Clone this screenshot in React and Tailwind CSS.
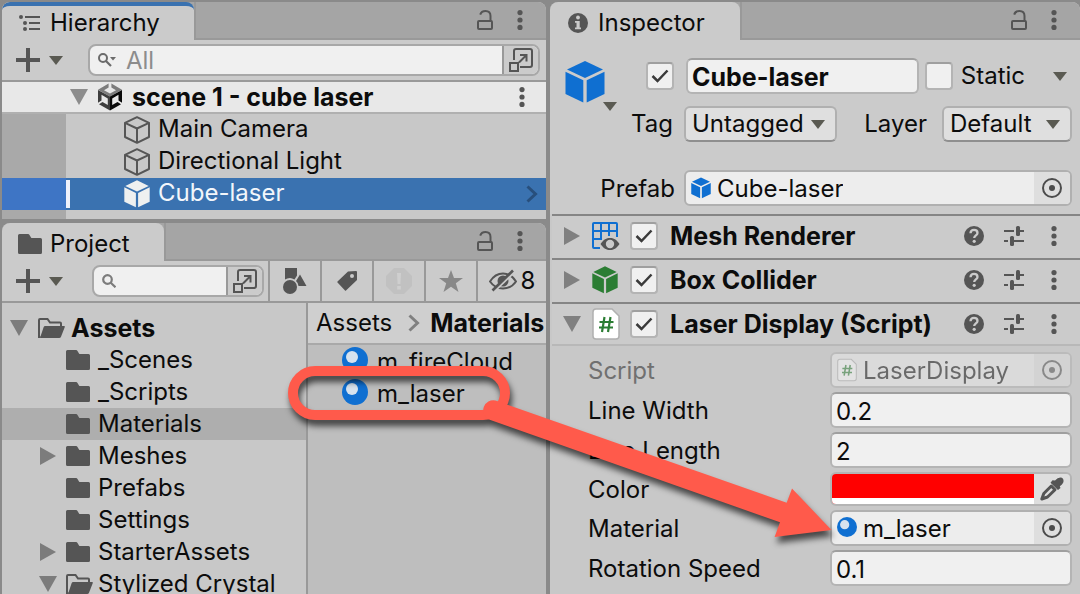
import { useId } from "react";

/* ---------- icons ---------- */

function Triangle({ dir = "down", className = "" }) {
  return dir === "down" ? (
    <svg className={className} width="18" height="16" viewBox="0 0 18 16" aria-hidden="true">
      <path d="M0 0H18L9 16Z" fill="currentColor" />
    </svg>
  ) : (
    <svg className={className} width="16" height="18" viewBox="0 0 16 18" aria-hidden="true">
      <path d="M0 0L16 9L0 18Z" fill="currentColor" />
    </svg>
  );
}

function Caret({ className = "" }) {
  return (
    <svg className={"shrink-0 text-[#5a5a52] " + className} width="14" height="9" viewBox="0 0 14 9" aria-hidden="true">
      <path d="M0 0H14L7 9Z" fill="currentColor" />
    </svg>
  );
}

function Dots() {
  return (
    <svg width="6" height="20" viewBox="0 0 6 20" fill="#555" aria-hidden="true">
      <circle cx="3" cy="2.6" r="2.6" />
      <circle cx="3" cy="10" r="2.6" />
      <circle cx="3" cy="17.4" r="2.6" />
    </svg>
  );
}

function Unlock() {
  return (
    <svg width="16" height="20" viewBox="0 0 16 20" fill="none" stroke="#555" strokeWidth="2" aria-hidden="true">
      <rect x="1" y="11" width="14" height="8" rx="1" />
      <path d="M3.2 4.6C4 2 6 1 8.500 1C11.500 1 13.500 2.800 13.500 6V11" />
    </svg>
  );
}

function Plus() {
  return (
    <svg width="24" height="24" viewBox="0 0 24 24" aria-hidden="true">
      <path d="M12 0V24M0 12H24" stroke="#555" strokeWidth="4" />
    </svg>
  );
}

function Expand() {
  return (
    <svg width="24" height="24" viewBox="0 0 24 24" fill="none" stroke="#555" strokeWidth="2" aria-hidden="true">
      <path d="M5 12V3Q5 1 7 1H21Q23 1 23 3V17Q23 19 21 19H11" />
      <rect x="1" y="15" width="8" height="8" />
      <path d="M10 14.500L17 7.500M11 7H17.500V13.500" />
    </svg>
  );
}

function Search({ menu }) {
  return menu ? (
    <svg className="shrink-0" width="18" height="14" viewBox="0 0 18 14" fill="none" aria-hidden="true">
      <circle cx="5" cy="5" r="4" stroke="#6b6b6b" strokeWidth="2" />
      <path d="M8 8L13 13" stroke="#6b6b6b" strokeWidth="2.200" />
      <path d="M12 4H18L15 7.500Z" fill="#6b6b6b" />
    </svg>
  ) : (
    <svg className="shrink-0" width="14" height="14" viewBox="0 0 14 14" fill="none" aria-hidden="true">
      <circle cx="5.500" cy="5.500" r="4.300" stroke="#7c7c7c" strokeWidth="2.200" />
      <path d="M8.500 8.500L13.500 13.300" stroke="#7c7c7c" strokeWidth="2.200" />
    </svg>
  );
}

function ListIcon() {
  return (
    <svg width="22" height="16" viewBox="0 0 22 16" fill="#555" aria-hidden="true">
      <circle cx="2" cy="2" r="2" />
      <circle cx="6" cy="8" r="2" />
      <circle cx="6" cy="14" r="2" />
      <path d="M6 1H21V3H6ZM10 7H21V9H10ZM10 13H21V15H10Z" />
    </svg>
  );
}

function UnityLogo() {
  return (
    <svg width="24" height="28" viewBox="0 0 24 28" aria-hidden="true">
      <path d="M10.600 0.500V4.500L6 7.200L12 10.500L18 7.200L13.400 4.500V0.500L24 6.800L12 13.600L0 6.800Z" fill="#7c7c7c" />
      <path d="M0 7L12 13.600V27.500L1 21.200L4.500 19L9.800 22V15.500L3.500 11.800V17.500L0 19.800Z" fill="#3d3d3d" />
      <path d="M24 7L12 13.600V27.500L23 21.200L19.500 19L14.200 22V15.500L20.500 11.800V17.500L24 19.800Z" fill="#0a0a0a" />
    </svg>
  );
}

function CubeOutline() {
  return (
    <svg width="26" height="28" viewBox="0 0 26 28" fill="none" stroke="#565656" strokeWidth="2" strokeLinejoin="round" aria-hidden="true">
      <path d="M13 1.200L25 6.800V21L13 26.800L1 21V6.800ZM1 6.800L13 12.500L25 6.800M13 12.500V26.800" />
    </svg>
  );
}

function CubeSolid({ className = "" }) {
  return (
    <svg className={className} viewBox="0 0 40 42" fill="currentColor" aria-hidden="true">
      <path d="M20 0L38 8.500L20 17L2 8.500Z" />
      <path d="M0.500 10.800L18.300 19.300V41.500L0.500 33Z" />
      <path d="M39.500 10.800L21.700 19.300V41.500L39.500 33Z" />
    </svg>
  );
}

function Folder() {
  return (
    <svg width="24" height="20" viewBox="0 0 24 20" aria-hidden="true">
      <path d="M0 1.500Q0 0 1.500 0H10Q11 0 11.500 1L13 3.500Q13.300 4 14 4H22.500Q24 4 24 5.500V18.500Q24 20 22.500 20H1.500Q0 20 0 18.500Z" fill="#555" />
    </svg>
  );
}

function FolderOpen() {
  return (
    <svg width="27" height="20" viewBox="0 0 27 20" aria-hidden="true">
      <path d="M2.500 19H1V2Q1 1 2 1H9.500L12 4.500H22Q23 4.500 23 5.500V8" fill="none" stroke="#555" strokeWidth="2" />
      <path d="M7.200 8H26Q27.200 8 26.800 9L23 18.800Q22.500 20 21.200 20H2L5.600 9.200Q6 8 7.200 8Z" fill="#555" />
    </svg>
  );
}

function MaterialBall({ className = "" }) {
  return (
    <svg className={className} viewBox="0 0 26 26" aria-hidden="true">
      <circle cx="13" cy="13" r="13" fill="#0f6fd1" />
      <circle cx="10" cy="10" r="6" fill="#d6e2ee" />
    </svg>
  );
}

function Chevron({ className = "" }) {
  return (
    <svg className={className} width="12" height="18" viewBox="0 0 12 18" fill="none" stroke="currentColor" strokeWidth="3" aria-hidden="true">
      <path d="M1.500 1.500L9.500 9L1.500 16.500" />
    </svg>
  );
}

function InfoIcon() {
  return (
    <svg width="20" height="20" viewBox="0 0 20 20" aria-hidden="true">
      <circle cx="10" cy="10" r="10" fill="#555" />
      <circle cx="10" cy="4.500" r="1.900" fill="#cbcbcb" />
      <path d="M7 8H11.700V14.500H13V16.300H7V14.500H8.500V9.700H7Z" fill="#cbcbcb" />
    </svg>
  );
}

function HelpIcon() {
  return (
    <svg width="20" height="20" viewBox="0 0 20 20" aria-hidden="true">
      <circle cx="10" cy="10" r="10" fill="#555" />
      <path d="M6.500 7.300C6.600 4.800 8.200 3.900 10 3.900C12 3.900 13.500 5 13.500 6.900C13.500 9.300 10.200 9.400 10.200 12" fill="none" stroke="#cbcbcb" strokeWidth="2.300" />
      <circle cx="10.200" cy="15.300" r="1.600" fill="#cbcbcb" />
    </svg>
  );
}

function Sliders() {
  return (
    <svg width="20" height="20" viewBox="0 0 20 20" fill="#555" aria-hidden="true">
      <path d="M0 4H10V6H0ZM16 4H20V6H16ZM0 14H4V16H0ZM10 14H20V16H10Z" />
      <rect x="12" y="0" width="4" height="10" rx="1.500" />
      <rect x="6" y="10" width="4" height="10" rx="1.500" />
    </svg>
  );
}

function MeshIcon() {
  return (
    <svg width="28" height="28" viewBox="0 0 28 28" fill="none" aria-hidden="true">
      <path d="M8 26H2Q1 26 1 25V2Q1 1 2 1H24Q25 1 25 2V15M9 1V18M17 1V14M1 9H25M1 17H10" stroke="#0f6fd1" strokeWidth="2" />
      <path d="M8.500 22C11.500 17.500 14.500 16 18 16C21.500 16 24.500 17.500 27.500 22C24.500 26.500 21.500 28 18 28C14.500 28 11.500 26.500 8.500 22Z" fill="#555" />
      <circle cx="18" cy="22" r="4.200" fill="#cbcbcb" />
    </svg>
  );
}

function ScriptIcon({ className = "" }) {
  return (
    <svg className={className} viewBox="0 0 28 32" fill="none" aria-hidden="true">
      <path d="M4 1H20L27 8V28Q27 31 24 31H4Q1 31 1 28V4Q1 1 4 1Z" fill="#fff" stroke="#b0b0b0" strokeWidth="1.500" />
      <path d="M12.500 9L10 24M18.500 9L16 24M7.500 14H21.500M7 19.500H21" stroke="#2b7d33" strokeWidth="2.200" />
    </svg>
  );
}

function Target() {
  return (
    <svg width="20" height="20" viewBox="0 0 20 20" aria-hidden="true">
      <circle cx="10" cy="10" r="9" fill="none" stroke="#4c4c4c" strokeWidth="2" />
      <circle cx="10" cy="10" r="3" fill="#4c4c4c" />
    </svg>
  );
}

function Eyedropper() {
  return (
    <svg width="24" height="24" viewBox="0 0 24 24" aria-hidden="true">
      <path d="M15 3.500Q18.500 -0.500 22 0.800Q24.500 2.500 23 6Q22 8 19.800 9.200L20.500 11L18 13L10.500 5.800L12.500 3.300Z" fill="#555" />
      <path d="M11.300 9L15 12.700L7.500 20L1.800 22L3.800 16.500Z" fill="none" stroke="#555" strokeWidth="3" strokeLinejoin="round" />
    </svg>
  );
}

function ShapesIcon() {
  return (
    <svg width="24" height="26" viewBox="0 0 24 26" fill="#555" aria-hidden="true">
      <path d="M2 0H14V7.500L11.500 11.500Q9 10 7 10Q4 10 2 11.500Z" />
      <circle cx="7" cy="19" r="7" />
      <path d="M17 6.500L23.500 18H15.500Q15 14.500 13 13Z" />
    </svg>
  );
}

function TagIcon() {
  return (
    <svg width="20" height="20" viewBox="0 0 20 20" aria-hidden="true">
      <path fillRule="evenodd" d="M11 0.500L19 0Q20 0 20 1V9L9 19.500Q8.500 20 8 19.500L0.500 11.500Q0 11 0.500 10.500ZM15 3A2 2 0 1 0 15 7A2 2 0 1 0 15 3Z" fill="#555" />
    </svg>
  );
}

function WarnIcon() {
  return (
    <svg width="26" height="26" viewBox="0 0 26 26" aria-hidden="true">
      <path d="M8 0H18L26 8V18L18 26H8L0 18V8Z" fill="#c1c1c1" />
      <path d="M11 5H15L14.400 16H11.600ZM11.200 18H14.800V21.500H11.200Z" fill="#cfcfcf" />
    </svg>
  );
}

function StarIcon() {
  return (
    <svg width="24" height="22" viewBox="0 0 24 22" aria-hidden="true">
      <path d="M12 0L15 8H24L16.800 13.200L19.500 22L12 16.800L4.500 22L7.200 13.200L0 8H9Z" fill="#888" />
    </svg>
  );
}

function HiddenIcon() {
  return (
    <svg width="28" height="24" viewBox="0 0 28 24" fill="none" aria-hidden="true">
      <path d="M1 12.500C4.500 7 9 4.500 14 4.500C19 4.500 23.500 7 27 12.500C23.500 17.500 19 19.500 14 19.500C9 19.500 4.500 17.500 1 12.500Z" stroke="#555" strokeWidth="2" />
      <circle cx="14" cy="12" r="5.500" fill="#555" />
      <path d="M5 22L25 3" stroke="#cbcbcb" strokeWidth="3" />
      <path d="M3.500 21.500L24 1.500" stroke="#555" strokeWidth="2.600" />
    </svg>
  );
}

/* ---------- shared controls ---------- */

function Check({ label, id, checked = false }) {
  return (
    <span className="grid shrink-0 place-items-center">
      <input
        id={id}
        type="checkbox"
        defaultChecked={checked}
        aria-label={label}
        className="peer col-start-1 row-start-1 size-7 appearance-none rounded border-2 border-[#b4b4b4] border-t-[#9f9f9f] bg-[#f0f0f0]"
      />
      <svg className="pointer-events-none invisible col-start-1 row-start-1 peer-checked:visible" width="18" height="14" viewBox="0 0 18 14" fill="none" aria-hidden="true">
        <path d="M1.500 7L6.500 12L16.500 1.500" stroke="#3a3a3a" strokeWidth="2.500" />
      </svg>
    </span>
  );
}

function Dropdown({ id, value, className = "" }) {
  return (
    <span className={"grid items-center " + className}>
      <select id={id} className="col-start-1 row-start-1 h-9 w-full appearance-none rounded-md border-2 border-[#b0b0b0] border-b-[#8f8f8f] bg-[#dfdfdf] pl-1.5">
        <option>{value}</option>
      </select>
      <Caret className="pointer-events-none col-start-1 row-start-1 mr-3 justify-self-end" />
    </span>
  );
}

function ObjectField({ icon, value, label, disabled }) {
  return (
    <div
      className={
        "flex h-9 min-w-0 items-stretch overflow-hidden rounded-md border-2 border-[#b0b0b0] bg-[#ededed]" +
        (disabled ? " opacity-50" : "")
      }
    >
      <span className="flex min-w-0 flex-1 items-center gap-1.5 pl-[5px]">
        {icon}
        <span className="truncate pt-0.5">{value}</span>
      </span>
      <button type="button" disabled={disabled} aria-label={"Select " + label} className="flex w-9 items-center justify-center bg-[#dedede]">
        <Target />
      </button>
    </div>
  );
}

function Panel({ title, icon, focused, tabClass, children, className = "" }) {
  return (
    <section className={"flex min-h-0 min-w-0 flex-col overflow-hidden rounded-t-lg bg-[#c8c8c8] " + className}>
      <header className="flex h-[38px] shrink-0 items-stretch bg-[#a5a5a5]">
        <h2
          className={
            "flex items-center rounded-t-lg bg-[#cbcbcb] " +
            tabClass +
            (focused ? " border-t-4 border-[#3a72b0]" : " pt-1")
          }
        >
          {icon}
          {title}
        </h2>
        <div className="flex flex-1 items-center justify-end gap-6 border-b-2 border-l-2 border-[#999] pr-[23px]">
          <button type="button" aria-label={"Lock " + title}><Unlock /></button>
          <button type="button" aria-label={title + " menu"}><Dots /></button>
        </div>
      </header>
      {children}
    </section>
  );
}

function AddButton() {
  return (
    <button type="button" aria-label="Create" className="flex shrink-0 items-center gap-[9px] pl-3.5">
      <Plus />
      <Caret />
    </button>
  );
}

function SearchBox({ placeholder, label, menu, className = "" }) {
  return (
    <div className={"flex h-8 min-w-0 overflow-hidden rounded-lg border-2 border-[#a8a8a8] bg-[#f0f0f0] " + className}>
      <label className="flex min-w-0 flex-1 items-center gap-2.5 pl-2">
        <Search menu={menu} />
        <input type="search" aria-label={label} placeholder={placeholder} className="w-full min-w-0 bg-transparent pt-0.5 placeholder:text-[#8c8c8c]" />
      </label>
      <button type="button" aria-label="Open search window" className="flex w-9 items-center justify-center border-l-2 border-[#999] bg-[#cbcbcb]">
        <Expand />
      </button>
    </div>
  );
}

/* ---------- hierarchy ---------- */

function HierarchyItem({ name, selected }) {
  return (
    <li className={"flex h-8 items-stretch " + (selected ? "bg-[#3a72b0] text-[#f2f6fb]" : "")}>
      <span className={"w-16 " + (selected ? "bg-[#3e75c5]" : "bg-[#a9a9a9]")} />
      <span className={"my-0.5 w-1 " + (selected ? "bg-[#eef0fb]" : "")} />
      <a href="#" className="flex flex-1 items-center gap-2 pr-2 pl-[54px]">
        {selected ? <CubeSolid className="h-7 w-[26px] text-[#eef0f0]" /> : <CubeOutline />}
        <span className="flex-1 pb-0.5">{name}</span>
        {selected && <Chevron className="text-[#284f7c]" />}
      </a>
    </li>
  );
}

function Hierarchy() {
  return (
    <Panel title="Hierarchy" icon={<ListIcon />} focused tabClass="w-48 gap-[9px] pl-[17px]" className="h-[217px] shrink-0">
      <div className="flex h-[42px] shrink-0 items-center gap-[25px] border-b-2 border-[#999] bg-[#cbcbcb] pr-1.5">
        <AddButton />
        <SearchBox menu placeholder="All" label="Search hierarchy" className="flex-1" />
      </div>
      <div className="flex h-8 shrink-0 items-center border-b-2 border-[#b0b0b0] bg-[#e8e8e8] pr-[21px] pl-[68px] text-[25px] font-bold">
        <Triangle className="text-[#8c8c8c]" />
        <span className="flex flex-1 items-center gap-2.5 pl-2.5">
          <UnityLogo />
          <span>scene 1 - cube laser</span>
        </span>
        <button type="button" aria-label="Scene menu"><Dots /></button>
      </div>
      <ul>
        <HierarchyItem name="Main Camera" />
        <HierarchyItem name="Directional Light" />
        <HierarchyItem name="Cube-laser" selected />
      </ul>
      <div className="w-16 flex-1 bg-[#a9a9a9]" />
    </Panel>
  );
}

/* ---------- project ---------- */

const folders = [
  { name: "_Scenes" },
  { name: "_Scripts" },
  { name: "Materials", selected: true },
  { name: "Meshes", arrow: "right" },
  { name: "Prefabs" },
  { name: "Settings" },
  { name: "StarterAssets", arrow: "right" },
  { name: "Stylized Crystal", arrow: "down", open: true },
];

function FilterButton({ label, children, wide }) {
  return (
    <button type="button" aria-label={label} className={"flex items-center justify-center gap-1 border-l-2 border-[#999] " + (wide ? "w-[70px] shrink-0" : "w-[52px] shrink-0")}>
      {children}
    </button>
  );
}

function Project() {
  return (
    <Panel title="Project" icon={<Folder />} tabClass="w-[162px] gap-2 pl-4" className="flex-1">
      <div className="flex h-[42px] shrink-0 items-stretch border-b-2 border-[#999] bg-[#cbcbcb]">
        <div className="flex min-w-0 flex-1 items-center gap-[29px] pr-1">
          <AddButton />
          <SearchBox label="Search project" className="flex-1" />
        </div>
        <FilterButton label="Filter by type"><ShapesIcon /></FilterButton>
        <FilterButton label="Filter by label"><TagIcon /></FilterButton>
        <FilterButton label="Filter by import log"><WarnIcon /></FilterButton>
        <FilterButton label="Favorites"><StarIcon /></FilterButton>
        <FilterButton label="Hidden packages" wide>
          <HiddenIcon />
          <span>8</span>
        </FilterButton>
      </div>
      <div className="grid min-h-0 flex-1 grid-cols-[306fr_238fr]">
        <ul className="min-w-0 border-r-2 border-[#999] pt-[9px]">
          <li className="flex h-8 items-center pl-2 text-[25px] font-bold">
            <Triangle className="text-[#7c7c7c]" />
            <a href="#" className="flex items-center gap-1.5 pl-2.5"><FolderOpen />Assets</a>
          </li>
          {folders.map((f) => (
            <li key={f.name} className={"flex h-8 items-center whitespace-nowrap " + (f.selected ? "bg-[#aeaeae]" : "")}>
              <span className="flex w-16 shrink-0 justify-center pl-7 text-[#7c7c7c]">
                {f.arrow && <Triangle dir={f.arrow} />}
              </span>
              <a href="#" className="flex items-center">
                <span className="w-8">{f.open ? <FolderOpen /> : <Folder />}</span>
                {f.name}
              </a>
            </li>
          ))}
        </ul>
        <div className="min-w-0 overflow-hidden bg-[#bebebe]">
          <nav className="flex h-[42px] items-center border-b-2 border-[#a9a9a9] bg-[#cfcfcf] pl-2 whitespace-nowrap">
            <a href="#">Assets</a>
            <Chevron className="mr-2.5 ml-4 shrink-0 text-[#808080]" />
            <a href="#" className="text-[25px] font-bold">Materials</a>
          </nav>
          <ul>
            {["m_fireCloud", "m_laser"].map((m) => (
              <li key={m}>
                <a href="#" className="flex h-8 items-center gap-[9px] pl-[34px]">
                  <MaterialBall className="mb-0.5 size-[26px]" />
                  <span className="pt-0.5">{m}</span>
                </a>
              </li>
            ))}
          </ul>
        </div>
      </div>
    </Panel>
  );
}

/* ---------- inspector ---------- */

function ComponentHeader({ title, icon, open }) {
  return (
    <div className={"flex h-11 items-center border-t-2 border-[#858585] bg-[#cbcbcb] pr-[23px] " + (open ? "border-b-2 border-b-[#b8b8b8]" : "pb-0.5")}>
      <button type="button" aria-label={"Toggle " + title} className="flex w-10 shrink-0 justify-center text-[#808080]">
        <Triangle dir={open ? "down" : "right"} />
      </button>
      <span className="w-[38px] shrink-0">{icon}</span>
      <Check checked label={"Enable " + title} />
      <h3 className="flex-1 pl-3 text-[25px] font-bold whitespace-nowrap">{title}</h3>
      <span className="flex items-center">
        <button type="button" aria-label={title + " help"}><HelpIcon /></button>
        <button type="button" aria-label={title + " presets"} className="ml-5"><Sliders /></button>
        <button type="button" aria-label={title + " menu"} className="ml-[27px]"><Dots /></button>
      </span>
    </div>
  );
}

function NumberRow({ label, value }) {
  const id = useId();
  return (
    <>
      <label htmlFor={id} className="pt-0.5">{label}</label>
      <input id={id} type="text" defaultValue={value} className="h-9 w-full min-w-0 rounded-md border-2 border-[#b4b4b4] border-t-[#9f9f9f] bg-[#f0f0f0] px-1 pt-0.5" />
    </>
  );
}

function Inspector() {
  return (
    <Panel title="Inspector" icon={<InfoIcon />} tabClass="w-[190px] gap-2.5 pl-[18px]">
      <div className="grid shrink-0 grid-cols-[134px_1fr] gap-y-3 bg-[#cbcbcb] pt-[18px] pr-2 pb-2">
        <div className="flex h-9 items-start justify-between pr-2.5 pl-[15px]">
          <button type="button" aria-label="Object icon" className="flex items-end pt-[3px]">
            <CubeSolid className="h-[42px] w-10 text-[#0f6fd1]" />
            <Caret className="-mr-3.5 -mb-2 -ml-0.5" />
          </button>
          <span className="pt-1"><Check checked label="Active" /></span>
        </div>
        <div className="flex items-center">
          <input aria-label="Name" defaultValue="Cube-laser" className="ml-0.5 h-9 w-0 flex-1 rounded-md border-2 border-[#b4b4b4] border-t-[#9f9f9f] bg-[#f0f0f0] px-1 pt-0.5 text-[25px] font-bold" />
          <label className="flex flex-none items-center gap-2 pl-1.5">
            <Check />
            Static
          </label>
          <button type="button" aria-label="Static flags" className="pr-[5px] pl-7"><Caret /></button>
        </div>

        <label htmlFor="tag" className="flex items-center justify-end pr-[11px]">Tag</label>
        <div className="flex items-center justify-between">
          <Dropdown id="tag" value="Untagged" className="w-[153px]" />
          <span className="flex items-center gap-[15px]">
            <label htmlFor="layer">Layer</label>
            <Dropdown id="layer" value="Default" className="w-[130px]" />
          </span>
        </div>

        <span className="mt-4 flex items-center justify-end pt-0.5 pr-[9px]">Prefab</span>
        <div className="mt-4">
          <ObjectField label="Prefab" value="Cube-laser" icon={<CubeSolid className="h-[22px] w-5 shrink-0 text-[#0f6fd1]" />} />
        </div>
      </div>

      <div className="ml-0.5 shrink-0">
        <ComponentHeader title="Mesh Renderer" icon={<MeshIcon />} />
        <ComponentHeader title="Box Collider" icon={<CubeSolid className="h-7 w-[26px] text-[#2b7d33]" />} />
        <ComponentHeader title="Laser Display (Script)" icon={<ScriptIcon className="h-8 w-7" />} open />
      </div>

      <div className="grid shrink-0 grid-cols-[242px_1fr] items-center gap-y-1 pt-1.5 pr-2 pl-[38px]">
        <span className="pt-0.5 text-[#707070]">Script</span>
        <ObjectField disabled label="Script" value="LaserDisplay" icon={<ScriptIcon className="h-6 w-5 shrink-0" />} />
        <NumberRow label="Line Width" value="0.2" />
        <NumberRow label="Line Length" value="2" />
        <span className="pt-0.5">Color</span>
        <div className="flex h-[34px] overflow-hidden rounded-md border-2 border-[#b4b4b4]">
          <button type="button" aria-label="Color value" className="flex-1 border-b-6 border-white bg-[#ff0000]" />
          <button type="button" aria-label="Pick a color" className="flex w-9 items-center justify-center bg-[#dedede]"><Eyedropper /></button>
        </div>
        <span className="pt-0.5">Material</span>
        <ObjectField label="Material" value="m_laser" icon={<MaterialBall className="mb-0.5 size-5 shrink-0" />} />
        <NumberRow label="Rotation Speed" value="0.1" />
      </div>
    </Panel>
  );
}

/* Callout drawn over the panels: outline round the asset and an arrow to its slot. */
function Callout() {
  return (
    <svg className="pointer-events-none absolute top-0 left-0 drop-shadow-[2px_6px_3px_rgba(0,0,0,0.65)]" width="1080" height="594" viewBox="0 0 1080 594" aria-hidden="true">
      <rect x="293" y="371" width="212" height="44" rx="22" fill="none" stroke="#ff5a4b" strokeWidth="10" />
      <path d="M495.500 400.600L786.700 502.700L792 488.600L831.500 530L774.600 537L780 522.300L489 419.400A10 10 0 0 1 495.500 400.600Z" fill="#ff5a4b" />
    </svg>
  );
}

export default function App() {
  return (
    <main className="relative grid h-screen grid-cols-[544fr_530fr] gap-1 overflow-hidden bg-[#8a8a8a] pt-0.5 pl-0.5 font-['Inter',sans-serif] text-[24px] leading-[30px] text-[#0c0c0c]">
      <div className="flex min-h-0 min-w-0 flex-col gap-1">
        <Hierarchy />
        <Project />
      </div>
      <Inspector />
      <Callout />
    </main>
  );
}
